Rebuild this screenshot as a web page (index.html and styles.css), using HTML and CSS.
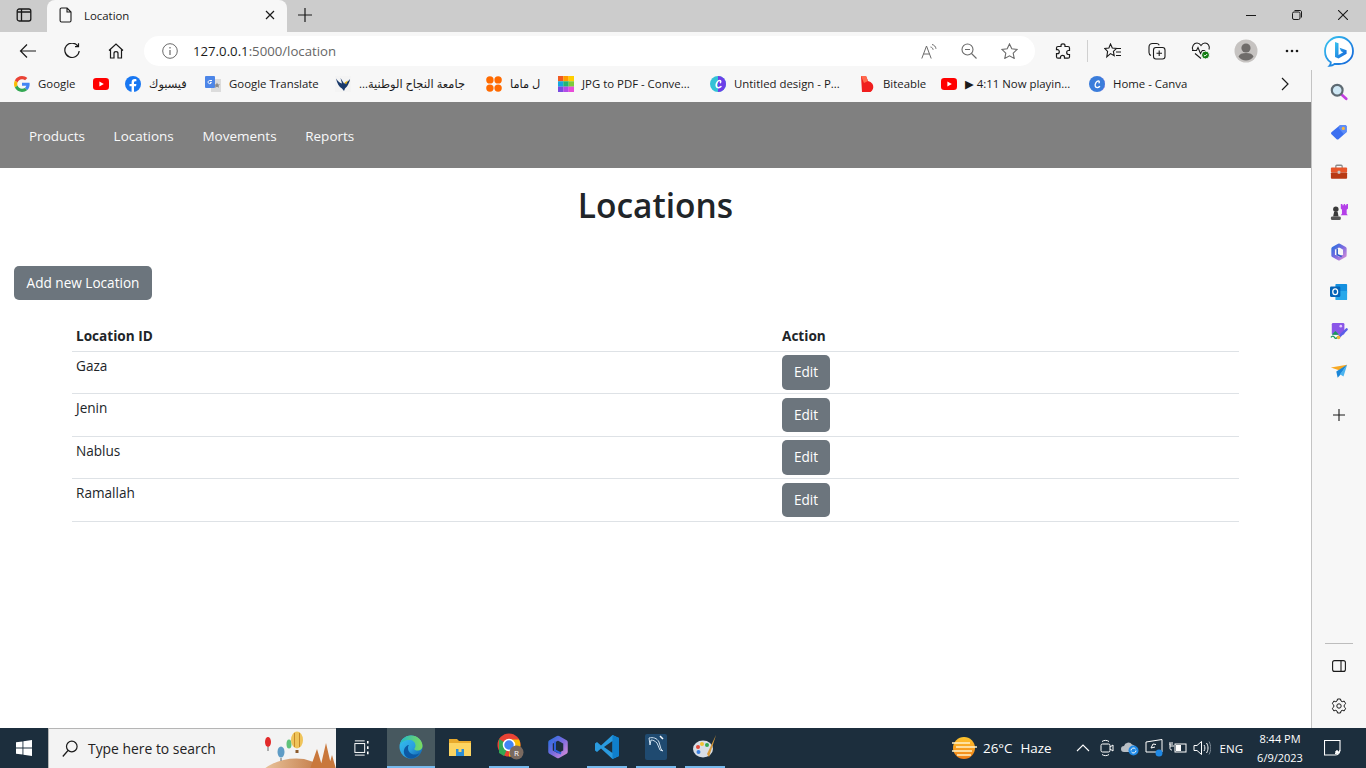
FILE: index.html
```html
<!DOCTYPE html>
<html lang="en">
<head>
<meta charset="utf-8">
<title>Location</title>
<link rel="stylesheet" href="styles.css">
</head>
<body>
<svg class="defs" width="0" height="0" aria-hidden="true">
  <defs>
    <linearGradient id="edgeA" x1="0" y1="0" x2="1" y2="1"><stop offset="0" stop-color="#35c1f1"/><stop offset=".55" stop-color="#2a9fe0"/><stop offset="1" stop-color="#0c59a4"/></linearGradient>
    <linearGradient id="edgeB" x1="0" y1="0" x2="1" y2="0"><stop offset="0" stop-color="#1fb8c8"/><stop offset="1" stop-color="#7ddc5c"/></linearGradient>
    <linearGradient id="copA" x1="0" y1="0" x2="1" y2="1"><stop offset="0" stop-color="#2f6fe0"/><stop offset=".5" stop-color="#7b6be0"/><stop offset="1" stop-color="#d08ad8"/></linearGradient>
    <linearGradient id="sun" x1="0" y1="0" x2="0" y2="1"><stop offset="0" stop-color="#ffc52e"/><stop offset="1" stop-color="#f07d16"/></linearGradient>
    <linearGradient id="hill" x1="0" y1="0" x2="1" y2="0"><stop offset="0" stop-color="#e9c49c"/><stop offset="1" stop-color="#b8662f"/></linearGradient>
    <linearGradient id="bingG" x1="0" y1="0" x2="1" y2="1"><stop offset="0" stop-color="#39c5f0"/><stop offset="1" stop-color="#1260d8"/></linearGradient>
    <symbol id="yt" viewBox="0 0 16 16"><rect y="2" width="16" height="12" rx="3.2" fill="#f00"/><path d="M6.4 5.4v5.2L10.8 8z" fill="#fff"/></symbol>
    <symbol id="canva" viewBox="0 0 16 16"><circle cx="8" cy="8" r="8" fill="#3b7ddb"/><path d="M8 0a8 8 0 0 1 8 8 8 8 0 0 1-6 7.7A8 8 0 0 0 8 0z" fill="#7d4fe0"/><path d="M10.6 10.5c-1.1 1.3-3.9 1.7-4.4-.5-.5-2.3 1.4-5 3.2-5 1 0 1.2 1 .6 1.8" fill="none" stroke="#fff" stroke-width="1.3" stroke-linecap="round"/></symbol>
    <symbol id="canva2" viewBox="0 0 16 16"><circle cx="8" cy="8" r="8" fill="#33c2d6"/><path d="M8 0a8 8 0 0 1 8 8 8 8 0 0 1-8 8z" fill="#6d3fe8"/><path d="M11 10.6c-1.3 1.4-4.4 1.6-4.8-.7-.4-2.5 1.6-5.3 3.5-5.3 1.1 0 1.3 1.1.7 2" fill="none" stroke="#fff" stroke-width="1.5" stroke-linecap="round"/></symbol>
  </defs>
</svg>

<header class="tabstrip">
  <button class="strip-btn" aria-label="Tab actions">
    <svg width="16" height="16" viewBox="0 0 16 16" fill="none" stroke="#1a1a1a" stroke-width="1.3"><rect x="1.2" y="2" width="13.6" height="12" rx="2"/><path d="M5.5 2v12M1.2 5h13.6" /></svg>
  </button>
  <div class="tab">
    <svg class="tab-doc" width="14" height="16" viewBox="0 0 14 16" fill="none" stroke="#1a1a1a" stroke-width="1.1"><path d="M2.5 1h5.6L12 5v8.6c0 .8-.6 1.4-1.3 1.4H2.5c-.8 0-1.4-.6-1.4-1.4V2.4C1.100 1.600 1.700 1 2.500 1zM8 1v4h4"/></svg>
    <span class="tab-title">Location</span>
    <svg class="tab-x" width="10" height="10" viewBox="0 0 10 10" stroke="#1a1a1a" stroke-width="1.2"><path d="M1 1l8 8M9 1l-8 8"/></svg>
  </div>
  <button class="strip-plus" aria-label="New tab">
    <svg width="14" height="14" viewBox="0 0 14 14" stroke="#1a1a1a" stroke-width="1.2"><path d="M7 0v14M0 7h14"/></svg>
  </button>
  <div class="win-controls">
    <span class="win-btn"><svg width="10" height="10" viewBox="0 0 10 10" stroke="#1a1a1a"><path d="M0 5.500h10"/></svg></span>
    <span class="win-btn"><svg width="10" height="10" viewBox="0 0 10 10" fill="none" stroke="#1a1a1a"><rect x=".5" y="2" width="7.500" height="7.500" rx="1.500"/><path d="M2.500 .5h5.500c1 0 1.500 .5 1.500 1.500v5.500"/></svg></span>
    <span class="win-btn"><svg width="10" height="10" viewBox="0 0 10 10" stroke="#1a1a1a" stroke-width="1.100"><path d="M0 0l10 10M10 0l-10 10"/></svg></span>
  </div>
</header>

<div class="toolbar">
  <span class="tool first"><svg width="18" height="16" viewBox="0 0 18 16" fill="none" stroke="#1a1a1a" stroke-width="1.200"><path d="M17 8H1.500M8 1.500L1.500 8 8 14.500"/></svg></span>
  <span class="tool"><svg width="16" height="16" viewBox="0 0 16 16" fill="none" stroke="#1a1a1a" stroke-width="1.200"><path d="M14 3.200A7.200 7.200 0 1 0 15.200 8"/><path d="M14.500 .2v3.500H11"/></svg></span>
  <span class="tool"><svg width="16" height="16" viewBox="0 0 16 16" fill="none" stroke="#1a1a1a" stroke-width="1.200"><path d="M1 7.500L8 1l7 6.500M2.500 6.500V15h3.500v-4.500c0-1 .9-1.800 2-1.800s2 .8 2 1.800V15h3.500V6.500"/></svg></span>
  <div class="address">
    <svg class="addr-info" width="16" height="16" viewBox="0 0 16 16" fill="none" stroke="#6b6b6b"><circle cx="8" cy="8" r="7.300"/><path d="M8 7v5M8 4v1.500" stroke-width="1.200"/></svg>
    <span class="url"><span class="url-host">127.0.0.1</span>:5000/location</span>
    <span class="addr-icons">
      <svg width="16" height="16" viewBox="0 0 16 16" fill="none" stroke="#6b6b6b" stroke-width="1"><path d="M.8 15.500L5.500 3l4.700 12.500M2.500 11h6"/><path d="M9.500 4c1.500.3 2.400 1.300 2.600 2.800M11 1.500c2.200.5 3.700 2 4 4.300" /></svg>
      <svg width="16" height="16" viewBox="0 0 16 16" fill="none" stroke="#6b6b6b" stroke-width="1.100"><circle cx="6.500" cy="6.500" r="5.500"/><path d="M10.500 10.500L15.500 15.500M4 6.500h5"/></svg>
      <svg width="17" height="16" viewBox="0 0 17 16" fill="none" stroke="#6b6b6b" stroke-width="1.100"><path d="M8.500 .9l2.300 4.900 5.300.6-3.900 3.700 1 5.300-4.700-2.600-4.700 2.600 1-5.300L.9 6.400l5.300-.6z"/></svg>
    </span>
  </div>
  <span class="tool ext"><svg width="16" height="16" viewBox="0 0 16 16" fill="none" stroke="#1a1a1a" stroke-width="1.200"><path d="M6 2.500C6 1.400 6.900.8 8 .8s2 .6 2 1.700V3.500h3c.8 0 1.500.7 1.500 1.500v2.500h-1c-1.100 0-1.800.9-1.800 2s.7 2 1.800 2h1V14c0 .6-.6 1.200-1.500 1.200H9.500v-1c0-1.100-.9-1.800-2-1.800s-2 .7-2 1.800v1H3c-.8 0-1.500-.6-1.500-1.500v-3h1c1.100 0 1.800-.9 1.800-2s-.7-2-1.800-2h-1V5c0-.8.7-1.500 1.500-1.500h3z"/></svg></span>
  <span class="tool-sep"></span>
  <span class="tool"><svg width="18" height="16" viewBox="0 0 18 16" fill="none" stroke="#1a1a1a" stroke-width="1.100"><path d="M6.500 1l1.800 4 4.200.5-3.100 2.900.8 4.300-3.700-2.100-3.700 3.300.8-5.500L.7 5.500 4.900 5zM12 5.500h5M12 9h5M12 12.500h5"/></svg></span>
  <span class="tool"><svg width="18" height="18" viewBox="0 0 18 18" fill="none" stroke="#1a1a1a" stroke-width="1.100"><path d="M3 13.500C1.800 13 1 12 1 10.500V5c0-2 1.500-3.500 3.500-3.500h4c1.200 0 2.300.7 2.800 1.700"/><rect x="5.500" y="5.500" width="11.500" height="11.500" rx="2.500"/><path d="M11.200 8.500v5.500M8.500 11.200H14"/></svg></span>
  <span class="tool"><svg width="20" height="18" viewBox="0 0 20 18" fill="none"><path d="M2 8C.2 4.500 3 1 6 1c1.700 0 3 1 4 2.500C11 2 12.300 1 14 1c3 0 5.200 3 4 6.500M4 11.500l6 5" stroke="#1a1a1a" stroke-width="1.100"/><path d="M1 8.500h4.500l1.500-3 2.500 6 1.800-3h3" stroke="#1a1a1a" stroke-width="1.100"/><circle cx="14.500" cy="13" r="4" fill="#107c10" stroke="#f7f7f7"/><path d="M12.800 13l1.200 1.200 2.200-2.200" stroke="#fff"/></svg></span>
  <span class="avatar"><svg width="24" height="24" viewBox="0 0 24 24"><circle cx="12" cy="12" r="11.500" fill="#c6c3c1"/><circle cx="12" cy="9" r="4.600" fill="#6f6c6a"/><path d="M4.500 17.500c1-2.400 3.500-3.500 7.500-3.500s6.500 1.100 7.500 3.500c-1.600 2.500-4.400 4-7.500 4s-5.900-1.500-7.500-4z" fill="#6f6c6a"/></svg></span>
  <span class="tool dots"><svg width="14" height="4" viewBox="0 0 14 4" fill="#1a1a1a"><circle cx="2" cy="2" r="1.300"/><circle cx="7" cy="2" r="1.300"/><circle cx="12" cy="2" r="1.300"/></svg></span>
  <span class="bing"><svg width="32" height="32" viewBox="0 0 32 32"><path d="M16 2a14 14 0 0 1 14 14c0 7.700-6.300 13-14 13h-4.500c-1.200 1-3 1.800-5 1.800 1-1 1.400-2.300 1.300-3.600C4.200 25 2 20.800 2 16A14 14 0 0 1 16 2z" fill="#fff" stroke="url(#bingG)" stroke-width="1.800"/><path d="M12 7l3.500 1.200v11.800l4.700-2.800-2.200-1-1.400-3.500 7 2.500v3.500l-8.100 4.800L12 22z" fill="url(#bingG)"/></svg></span>
</div>

<div class="middle">
  <div class="viewport">
    <nav class="bookmarks">
      <a class="bm"><svg class="bm-icon" viewBox="0 0 48 48"><path fill="#EA4335" d="M24 9.500c3.540 0 6.710 1.220 9.210 3.600l6.850-6.850C35.900 2.380 30.470 0 24 0 14.620 0 6.510 5.380 2.560 13.220l7.980 6.190C12.430 13.720 17.740 9.500 24 9.500z"/><path fill="#4285F4" d="M46.980 24.550c0-1.570-.15-3.090-.38-4.550H24v9.020h12.940c-.58 2.960-2.260 5.480-4.780 7.180l7.730 6c4.510-4.180 7.090-10.360 7.090-17.650z"/><path fill="#FBBC05" d="M10.530 28.590c-.48-1.450-.76-2.990-.76-4.590s.27-3.140.76-4.590l-7.980-6.190C.92 16.460 0 20.120 0 24c0 3.880.92 7.540 2.560 10.780l7.970-6.190z"/><path fill="#34A853" d="M24 48c6.480 0 11.930-2.130 15.890-5.810l-7.730-6c-2.150 1.450-4.920 2.300-8.160 2.300-6.260 0-11.570-4.220-13.470-9.910l-7.980 6.190C6.510 42.620 14.620 48 24 48z"/></svg><span>Google</span></a>
      <a class="bm"><svg class="bm-icon"><use href="#yt"/></svg></a>
      <a class="bm"><svg class="bm-icon" viewBox="0 0 16 16"><circle cx="8" cy="8" r="8" fill="#1877f2"/><path d="M11 10.300l.4-2.300H9V6.500c0-.7.4-1.300 1.400-1.300h1V3.200s-.9-.2-1.800-.2C7.800 3 6.600 4.100 6.600 6.200V8H4.500v2.300h2.100V16h2.400v-5.700z" fill="#fff"/></svg><span dir="rtl">فيسبوك</span></a>
      <a class="bm"><svg class="bm-icon" viewBox="0 0 16 16"><rect x="6" y="3" width="10" height="13" fill="#dcdcdc"/><rect width="10" height="12" rx="1" fill="#4d86e8"/><path d="M7 4.500H4.800c-1 0-1.700.7-1.700 1.600S3.800 7.700 4.800 7.700c.9 0 1.500-.5 1.600-1.300H5" fill="none" stroke="#fff"/><path d="M12 6.500l1 2 2-.2-1.500 1.500.5 2-2-1-2 1 .5-2L9 8.300l2 .2z" fill="#8a8a8a"/></svg><span>Google Translate</span></a>
      <a class="bm"><svg class="bm-icon" viewBox="0 0 16 16"><rect width="16" height="16" fill="#f4f4f4"/><path d="M1 2.500c2 3 4 4.500 6 5L5.500 2l3.500 5.500c2-.5 4-2 6-4.500-.5 4-3 8-5 9.500L9 15l-2-2.500C4 11 2 7 1 2.500z" fill="#1a3a6b"/><path d="M9.500 6.500l3.500-2-2 4z" fill="#e7b416"/></svg><span dir="rtl" class="bm-rtl">جامعة النجاح الوطنية...</span></a>
      <a class="bm"><svg class="bm-icon" viewBox="0 0 16 16" fill="#ff6a00"><circle cx="3.900" cy="3.900" r="3.700"/><circle cx="12.100" cy="3.900" r="3.700"/><circle cx="3.900" cy="12.100" r="3.700"/><circle cx="12.100" cy="12.100" r="3.700"/></svg><span dir="rtl">ل ماما</span></a>
      <a class="bm"><svg class="bm-icon" viewBox="0 0 16 16"><rect width="5.400" height="5.400" fill="#f05a22"/><rect x="5.300" width="5.400" height="5.400" fill="#ff9d00"/><rect x="10.600" width="5.400" height="5.400" fill="#ffcf00"/><rect y="5.300" width="5.400" height="5.400" fill="#16a5e0"/><rect x="5.300" y="5.300" width="5.400" height="5.400" fill="#22b573"/><rect x="10.600" y="5.300" width="5.400" height="5.400" fill="#7ccb3c"/><rect y="10.600" width="5.400" height="5.400" fill="#7a4be0"/><rect x="5.300" y="10.600" width="5.400" height="5.400" fill="#b24be8"/><rect x="10.600" y="10.600" width="5.400" height="5.400" fill="#e84bd8"/></svg><span>JPG to PDF - Conve...</span></a>
      <a class="bm"><svg class="bm-icon"><use href="#canva2"/></svg><span>Untitled design - P...</span></a>
      <a class="bm"><svg class="bm-icon" viewBox="0 0 16 16"><path d="M2 0h5l2 5a6 6 0 1 1-4 11H3z" fill="#f01e1e"/><path d="M2 0h5l2 5-4 2z" fill="#ff6a4d"/></svg><span>Biteable</span></a>
      <a class="bm"><svg class="bm-icon"><use href="#yt"/></svg><span>▶ 4:11 Now playin...</span></a>
      <a class="bm"><svg class="bm-icon"><use href="#canva"/></svg><span>Home - Canva</span></a>
      <svg class="bm-more" width="8" height="14" viewBox="0 0 8 14" fill="none" stroke="#1a1a1a" stroke-width="1.200"><path d="M1 1l6 6-6 6"/></svg>
    </nav>

    <main class="page">
      <nav class="site-nav">
        <a>Products</a>
        <a>Locations</a>
        <a>Movements</a>
        <a>Reports</a>
      </nav>
      <h1 class="title">Locations</h1>
      <a class="btn add">Add new Location</a>
      <table class="grid">
        <thead><tr><th>Location ID</th><th>Action</th></tr></thead>
        <tbody>
          <tr><td>Gaza</td><td><a class="btn edit">Edit</a></td></tr>
          <tr><td>Jenin</td><td><a class="btn edit">Edit</a></td></tr>
          <tr><td>Nablus</td><td><a class="btn edit">Edit</a></td></tr>
          <tr><td>Ramallah</td><td><a class="btn edit">Edit</a></td></tr>
        </tbody>
      </table>
    </main>
  </div>

  <aside class="sidebar">
    <span class="side"><svg width="18" height="18" viewBox="0 0 20 20" fill="none"><path d="M12.500 12.500L18 17.500" stroke="#c23fe0" stroke-width="3" stroke-linecap="round"/><circle cx="8" cy="8" r="6" fill="#cfe8f5" stroke="#5e6a72" stroke-width="2.400"/></svg></span>
    <span class="side"><svg width="18" height="18" viewBox="0 0 20 20"><path d="M11 2.500h6c.8 0 1.500.7 1.500 1.500v6L9.500 18c-.6.600-1.500.6-2.100 0L1.600 12.400c-.6-.6-.6-1.500 0-2.100z" fill="#3b6ff0"/><path d="M11 2.500h6c.8 0 1.500.7 1.500 1.500v6l-3 2.500-6-7z" fill="#5c8cf7"/><circle cx="14.800" cy="6" r="1.800" fill="#f5b63f"/></svg></span>
    <span class="side"><svg width="18" height="18" viewBox="0 0 20 20"><path d="M6.500 6V3.500c0-.6.400-1 1-1h5c.6 0 1 .4 1 1V6" fill="none" stroke="#8a8a8a" stroke-width="1.400"/><rect x="1" y="5" width="18" height="5.500" rx="1" fill="#e8562a"/><rect x="1" y="10.500" width="18" height="7" rx="1" fill="#b83a14"/><rect x="8.500" y="8.500" width="3" height="3.500" rx=".5" fill="#c8c8c8"/></svg></span>
    <span class="side"><svg width="18" height="18" viewBox="0 0 20 20"><path d="M12 1h1.800v1.500h1.400V1h1.600v1.500h1.400V1H20v5l-1.500 1.500V12l1.300 1.500H12l1.300-1.500V7.500L12 6z" fill="#b43fe8"/><circle cx="6.500" cy="7" r="3" fill="#3a3a3a"/><path d="M4.500 10h4l1 5h-6z" fill="#3a3a3a"/><rect x="1" y="15" width="11" height="4" rx="1.500" fill="#555"/></svg></span>
    <span class="side"><svg width="18" height="18" viewBox="0 0 20 20" fill="none"><path d="M10 2.500l6.500 3.700v7.600L10 17.500l-6.500-3.700V6.200z" stroke="url(#copA)" stroke-width="4" stroke-linejoin="round"/><path d="M8 6v7l5 2" stroke="#2a55c8" stroke-width="1.600"/></svg></span>
    <span class="side"><svg width="18" height="18" viewBox="0 0 20 20"><rect x="6" y="1" width="13" height="11" rx="1" fill="#1490df"/><path d="M6 9h13v9c0 .6-.4 1-1 1H7c-.6 0-1-.4-1-1z" fill="#28a8ea"/><rect x="0" y="4" width="11.500" height="11.500" rx="1.200" fill="#0364b8"/><ellipse cx="5.800" cy="9.800" rx="2.700" ry="3.200" fill="none" stroke="#fff" stroke-width="1.400"/></svg></span>
    <span class="side"><svg width="18" height="18" viewBox="0 0 20 20"><rect x="2" y="0" width="14" height="13" rx="1.500" fill="#8a56e8"/><circle cx="12" cy="3.500" r="1.500" fill="#e0c8ff"/><path d="M2 13l4-4 4 4z" fill="#1c9b5a"/><path d="M1 16c1.500-2 3-2 4 0s2.500 1 4-1" fill="none" stroke="#1c9b5a" stroke-width="1.400"/><path d="M18.500 7L10 15.500" stroke="#5a5ee8" stroke-width="2.600" stroke-linecap="round"/><circle cx="9.500" cy="16" r="2" fill="#f2b33a"/></svg></span>
    <span class="side"><svg width="18" height="18" viewBox="0 0 20 20"><path d="M1 5l18-3-6.500 7z" fill="#f7a823"/><path d="M19 2L7 9.500l1.500 7 3-3.500z" fill="#1a86d8"/><path d="M19 2l-4 13-4-2.500z" fill="#4cb4ef"/></svg></span>
    <span class="side plus"><svg width="14" height="14" viewBox="0 0 14 14" stroke="#1a1a1a" stroke-width="1.100"><path d="M7 1v12M1 7h12"/></svg></span>
    <span class="side-fill"></span>
    <span class="side-line"></span>
    <span class="side"><svg width="14" height="12" viewBox="0 0 14 12" fill="none" stroke="#1a1a1a" stroke-width="1.100"><rect x=".6" y=".6" width="12.800" height="10.800" rx="2"/><path d="M9 .6v10.800"/></svg></span>
    <span class="side"><svg width="16" height="16" viewBox="0 0 16 16" fill="none" stroke="#1a1a1a" stroke-width="1"><path d="M6.500 1h3l.5 2 1.200.7 2-.6 1.500 2.600-1.500 1.400v1.800l1.500 1.400-1.500 2.600-2-.6L10 13l-.5 2h-3L6 13l-1.200-.7-2 .6-1.500-2.600 1.500-1.400V7.100L1.300 5.700l1.500-2.600 2 .6L6 3z"/><circle cx="8" cy="8" r="2.200"/></svg></span>
  </aside>
</div>

<footer class="taskbar">
  <span class="start"><svg width="16" height="16" viewBox="0 0 18 18" fill="#fff"><path d="M0 2.600l7.300-1V8.500H0zM8.300 1.400L18 0v8.500H8.300zM0 9.500h7.300v6.900l-7.300-1zM8.300 9.500H18V18l-9.700-1.400z"/></svg></span>
  <div class="search">
    <svg class="search-glass" width="16" height="18" viewBox="0 0 16 18" fill="none" stroke="#1a1a1a" stroke-width="1.200"><circle cx="9.800" cy="6.500" r="5.300"/><path d="M6 10.500L.8 16.500"/></svg>
    <span class="search-text">Type here to search</span>
    <svg class="search-art" width="80" height="40" viewBox="0 0 80 40"><path d="M8 40c10-8 25-12 40-10l32 10z" fill="url(#hill)"/><path d="M54 40l7-20 6 20zM64 40l6-26 6 26zM72 40l4-14 4 14z" fill="#c9783c"/><ellipse cx="12" cy="13" rx="3" ry="5" fill="#e22a2a"/><path d="M12 18v4" stroke="#666"/><ellipse cx="25" cy="23" rx="3.500" ry="5.500" fill="#5f9cc5"/><path d="M25 29v3" stroke="#666"/><ellipse cx="33" cy="15" rx="2.500" ry="4.500" fill="#5fc27a"/><ellipse cx="41" cy="11" rx="6" ry="8.500" fill="#efc45a"/><path d="M38.500 4v14M43.500 4v14" stroke="#c68a2a"/><rect x="39.500" y="21" width="3" height="3" fill="#8b5a2b"/></svg>
  </div>
  <span class="tb-view"><svg width="16" height="18" viewBox="0 0 18 18" fill="none" stroke="#fff" stroke-width="1.100"><path d="M1 1h11M1 17h11"/><rect x="1" y="4" width="11" height="10"/><path d="M15.500 1v3M15.500 7v3M15.500 13v3" stroke-width="1.800"/></svg></span>
  <span class="tb active"><svg width="24" height="24" viewBox="0 0 24 24"><circle cx="12" cy="12" r="11.500" fill="url(#edgeA)"/><path d="M.8 10C2 4.500 6.500.5 12 .5c6.400 0 11.500 5 11.500 10.500 0 3.200-2.500 4.600-5 4.600-1.800 0-3.300-.7-3.300-1.500 0-.6 1.300-1.300 1.300-3.300C16.500 7 13.500 5 10.500 5 6 5 2 7 .8 10z" fill="url(#edgeB)"/><path d="M9 13c0 4 3 6.500 6.500 6.500 2 0 3.500-.5 5-1.500-2 3.500-5 5.500-8.500 5.500C7 23.500 4 19 5 15c.6-3 3-5 5-5-.7.800-1 1.800-1 3z" fill="#0c59a4"/></svg></span>
  <span class="tb plain"><svg width="24" height="24" viewBox="0 0 24 24"><path d="M1 4h8l2 2h12v15H1z" fill="#e8a92c"/><rect x="1" y="8" width="22" height="13" fill="#fcd462"/><rect x="8" y="14" width="8" height="7" fill="#2b8dd6"/><rect x="10.500" y="14" width="3" height="3" fill="#fcd462"/></svg></span>
  <span class="tb mark chrome"><svg width="28" height="28" viewBox="0 0 28 28"><circle cx="12" cy="12" r="11.500" fill="#ea4335"/><path d="M12 12L2 6v14l5 3z" fill="#34a853"/><path d="M12 23.500a11.500 11.500 0 0 0 10-17H12z" fill="#fbbc05"/><circle cx="12" cy="12" r="5.500" fill="#4285f4" stroke="#fff" stroke-width="1.500"/><circle cx="19.500" cy="19.500" r="7" fill="#7a6a60"/><text x="19.500" y="22.500" class="avatar-r" text-anchor="middle">R</text></svg></span>
  <span class="tb plain"><svg width="22" height="24" viewBox="0 0 22 24" fill="none"><path d="M11 3l7.500 4.300v9.400L11 21l-7.500-4.300V7.300z" stroke="url(#copA)" stroke-width="4.500" stroke-linejoin="round"/><path d="M8 6.500v9l6 3" stroke="#2f5fd8" stroke-width="2"/></svg></span>
  <span class="tb mark"><svg width="26" height="26" viewBox="0 0 26 26"><path d="M18.500 1L25 4v18l-6.500 3L7 14.500l-4 3.500-2-1.500v-7L3 8l4 3.500z" fill="#2a9bdf"/><path d="M18.500 7v12L10 13z" fill="#1c2e3d"/><path d="M18.500 1L25 4v18l-6.500 3z" fill="#0f7fcc"/></svg></span>
  <span class="tb mark"><svg width="24" height="28" viewBox="0 0 24 28"><rect x="1" y="1" width="22" height="26" rx="2" fill="#1f4a70"/><path d="M5 5c4-1 8 0 10 4l2 7 2 2-3-1-3-7c-2-2-4-3-6-3l-1 5z" fill="none" stroke="#cfe0ee" stroke-width="1"/><path d="M16 3l3 3" stroke="#fff" stroke-width="1.500"/></svg></span>
  <span class="tb mark"><svg width="26" height="26" viewBox="0 0 26 26"><ellipse cx="11" cy="15" rx="10" ry="8.500" fill="#d8dee6"/><circle cx="6" cy="13" r="2" fill="#e24a3a"/><circle cx="10" cy="10" r="2" fill="#f2c232"/><circle cx="15" cy="11" r="2" fill="#35a853"/><circle cx="6.500" cy="18" r="2" fill="#3a7fe0"/><path d="M24 1l-9 19 2 3z" fill="#d89a3a"/></svg></span>
  <span class="tb-fill"></span>
  <div class="weather">
    <svg width="26" height="24" viewBox="0 0 26 24"><circle cx="13" cy="12" r="11" fill="url(#sun)"/><path d="M1 7h18M5 11h21M1 15h20M6 19h14" stroke="#fff2c8" stroke-width="1.300"/></svg>
    <span class="temp">26°C</span>
    <span class="haze">Haze</span>
  </div>
  <div class="tray">
    <svg class="t-up" width="14" height="8" viewBox="0 0 14 8" fill="none" stroke="#fff" stroke-width="1.100"><path d="M1 7l6-6 6 6"/></svg>
    <svg class="t-ic" width="16" height="18" viewBox="0 0 16 18" fill="none" stroke="#fff"><rect x="2" y="5" width="9" height="8" rx="1.500"/><path d="M11 8l3-2v6l-3-2M3 2.500c2-1.500 5-1.500 7 0M3 15.500c2 1.500 5 1.500 7 0"/></svg>
    <svg class="t-ic" width="18" height="16" viewBox="0 0 18 16"><path d="M3 12a3 3 0 0 1 0-6 4.500 4.500 0 0 1 8-1.500 3.500 3.500 0 0 1 3 4V12z" fill="#b8bec4"/><circle cx="12.500" cy="10.500" r="5" fill="#1e88e5"/><path d="M10 10.500a2.500 2.500 0 0 1 4.500-1.500M15 10.500a2.500 2.500 0 0 1-4.500 1.500" stroke="#fff" fill="none"/></svg>
    <svg class="t-ic" width="18" height="18" viewBox="0 0 18 18" fill="none" stroke="#fff"><path d="M1 3l16-2.500V13H1zM6 9l2-4 3 .5M6 9l4-1"/><circle cx="14" cy="14" r="3.500" fill="#1e88e5" stroke="none"/></svg>
    <svg class="t-ic" width="18" height="14" viewBox="0 0 18 14" fill="none" stroke="#fff"><rect x="6" y="3" width="11" height="8"/><rect x="7.500" y="4.500" width="4" height="5" fill="#fff"/><path d="M1 5h4M1 2.500v5c0 1 .8 1.500 2 1.500M3 1v3M1 1v3"/></svg>
    <svg class="t-ic" width="18" height="16" viewBox="0 0 18 16" fill="none" stroke="#fff"><path d="M1 5.500h3L8.500 1.500v13L4 10.500H1zM11 5c1.200 1.700 1.200 4.300 0 6M13.500 3c2 3 2 7 0 10" /><path d="M16 1.500c2.300 4 2.300 9 0 13" stroke="#7b8894"/></svg>
    <span class="eng">ENG</span>
  </div>
  <div class="clock"><span>8:44 PM</span><span>6/9/2023</span></div>
  <span class="notif"><svg width="18" height="16" viewBox="0 0 18 16" fill="none" stroke="#fff"><path d="M.5.500h15.500v10c-.5 3-3 4.500-5 4.500H.5z" stroke-width="1.100"/><path d="M16 10c-.5 2.500-3 4-5 3.500" /><circle cx="13" cy="12" r="1.300" fill="#fff"/></svg></span>
</footer>
</body>
</html>
```

FILE: styles.css
```css
* { box-sizing: border-box; }
html, body { margin: 0; height: 100%; }
body {
  width: 1366px;
  height: 768px;
  overflow: hidden;
  display: flex;
  flex-direction: column;
  background: #fff;
  font-family: "Open Sans", "DejaVu Sans", sans-serif;
  color: #212529;
}
.defs { position: absolute; }
svg { display: block; flex: none; }

/* tab strip */
.tabstrip {
  height: 32px;
  flex: none;
  display: flex;
  background: #cccccc;
}
.strip-btn, .strip-plus {
  border: 0;
  padding: 0;
  background: none;
  display: flex;
  align-items: center;
  justify-content: center;
}
.strip-btn { width: 47px; padding-bottom: 2px; }
.strip-plus { width: 36px; padding-bottom: 2px; }
.tab {
  width: 240px;
  display: flex;
  align-items: center;
  padding: 0 12px 2px 12px;
  background: #f7f7f7;
  border-radius: 8px 8px 0 0;
}
.tab-title {
  flex: 1;
  margin-left: 11px;
  font-size: 11.4px;
  color: #1a1a1a;
}
.win-controls { margin-left: auto; display: flex; }
.win-btn {
  width: 46px;
  display: flex;
  align-items: center;
  justify-content: center;
  padding-bottom: 2px;
}

/* toolbar */
.toolbar {
  height: 38px;
  flex: none;
  display: flex;
  align-items: center;
  background: #f7f7f7;
}
.tool, .avatar {
  width: 44px;
  height: 30px;
  display: flex;
  align-items: center;
  justify-content: center;
}
.tool.first { margin-left: 6px; }
.tool.ext { margin-left: 6px; }
.tool-sep { width: 1px; height: 22px; background: #d0d0d0; margin: 0 3px 0 2px; }
.avatar { margin-left: 1px; }
.dots { margin-left: 2px; }
.bing { width: 44px; margin-left: 3px; display: flex; justify-content: center; }
.address {
  width: 891px;
  height: 30px;
  margin-left: 6px;
  display: flex;
  align-items: center;
  background: #fff;
  border-radius: 15px;
  padding: 0 17px 0 18px;
}
.url {
  margin-left: 15px;
  font-size: 13.2px;
  color: #666;
}
.url-host { color: #1a1a1a; }
.addr-icons {
  margin-left: auto;
  display: flex;
  align-items: center;
  gap: 24px;
}

/* middle */
.middle { flex: 1; display: flex; min-height: 0; }
.viewport { flex: 1; min-width: 0; display: flex; flex-direction: column; }
.sidebar {
  width: 55px;
  flex: none;
  display: flex;
  flex-direction: column;
  align-items: center;
  padding: 2px 0 2px 0;
  background: #f7f7f7;
  border-left: 1px solid #c4c4c4;
}
.side {
  width: 40px;
  height: 40px;
  display: flex;
  align-items: center;
  justify-content: center;
}
.side.plus { height: 46px; }
.side-fill { flex: 1; }
.side-line { width: 28px; height: 1px; background: #bdbdbd; margin-bottom: 2px; }

/* bookmarks */
.bookmarks {
  height: 32px;
  flex: none;
  display: grid;
  grid-template-columns: 79px 32px 80px 130px 151px 72px 152px 149px 82px 148px 192px 8px;
  align-items: center;
  padding-left: 14px;
  padding-bottom: 4px;
  background: #f7f7f7;
  font-size: 11.4px;
  color: #1a1a1a;
}
.bm {
  display: flex;
  align-items: center;
  gap: 8px;
  white-space: nowrap;
  overflow: hidden;
}
.bm span { padding-bottom: 2px; }
.bm-icon { width: 16px; height: 16px; }

/* page */
.page {
  flex: 1;
  min-height: 0;
  background: #fff;
}
.site-nav {
  height: 66px;
  display: flex;
  align-items: center;
  gap: 28.6px;
  padding: 2px 0 0 29px;
  background: #808080;
  font-size: 13.5px;
  color: #f8f9fa;
}
.title {
  margin: 13px 0 0;
  height: 48px;
  line-height: 48px;
  text-align: center;
  font-size: 33.5px;
  font-weight: 600;
  color: #212529;
}
.btn {
  display: inline-flex;
  align-items: center;
  justify-content: center;
  background: #6c757d;
  color: #fff;
  border-radius: 5px;
  font-size: 13.6px;
  padding-bottom: 1px;
}
.add {
  display: flex;
  width: 138px;
  height: 34px;
  margin: 37px 0 0 14px;
}
.edit { width: 48px; height: 34.5px; }
.grid {
  width: 1167px;
  margin: 21px 0 0 72px;
  border-collapse: collapse;
  table-layout: fixed;
  font-size: 13.6px;
}
.grid th, .grid td {
  padding: 4px;
  text-align: left;
  vertical-align: top;
  border-bottom: 1px solid #dee2e6;
}
.grid th { height: 30px; padding: 0 4px; vertical-align: middle; font-weight: 700; color: #212529; }
.grid th:first-child, .grid td:first-child { width: 706px; }
.grid td { height: 42.5px; padding: 3.5px 4px 0; }
.grid td:first-child { line-height: 24px; padding-top: 2px; }

/* taskbar */
.taskbar {
  height: 40px;
  flex: none;
  display: flex;
  align-items: center;
  background: #1c2e3d;
  color: #fff;
}
.start {
  width: 48px;
  height: 40px;
  display: flex;
  align-items: center;
  justify-content: center;
}
.search {
  width: 288px;
  height: 40px;
  display: flex;
  align-items: center;
  padding-left: 13px;
  background: #f3f3f3;
  border: 1px solid #b5b5b5;
  border-width: 1px 0 0 1px;
  overflow: hidden;
}
.search-text {
  margin-left: 10px;
  font-size: 13.9px;
  color: #222;
}
.search-art { margin-left: auto; }
.tb-view, .tb {
  display: flex;
  align-items: center;
  justify-content: center;
  height: 40px;
}
.tb-view { width: 51px; }
.tb { width: 40px; margin: 0 5px 0 4px; border-bottom: 2px solid transparent; }
.tb.active { width: 48px; margin: 0 1px 0 0; background: #47585f; border-bottom-color: #76b9ed; }
.tb.mark { border-bottom-color: #76b9ed; }
.tb.chrome { padding-left: 4px; }
.avatar-r { font: 8px "Open Sans", sans-serif; fill: #fff; }
.tb-fill { flex: 1; }
.weather {
  display: flex;
  align-items: center;
  font-size: 13.4px;
  color: #fff;
}
.temp { margin-left: 6px; }
.haze { margin-left: 8px; }
.tray {
  display: flex;
  align-items: center;
  margin-left: 24px;
  gap: 6px;
}
.t-up { margin-right: 3px; }
.eng { margin-left: 3px; font-size: 11.5px; color: #fff; }
.clock {
  width: 68px;
  margin-left: 3px;
  display: flex;
  flex-direction: column;
  align-items: center;
  gap: 5px;
  font-size: 11px;
  line-height: 14px;
}
.notif {
  width: 38px;
  margin-right: 14px;
  display: flex;
  justify-content: center;
}
```
